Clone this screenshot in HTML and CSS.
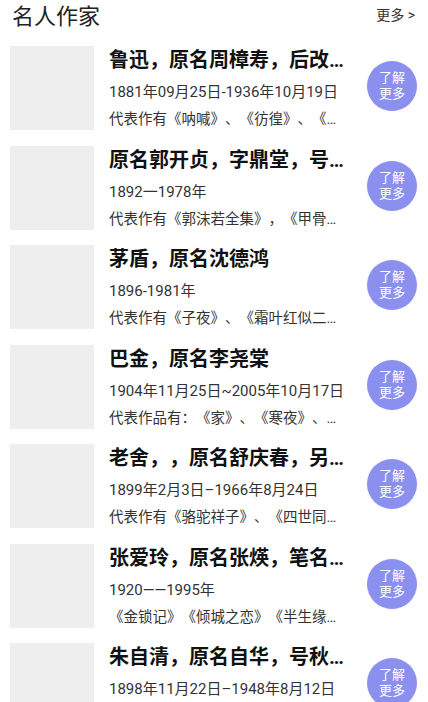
FILE: index.html
```html
<!DOCTYPE html>
<html lang="zh-CN">
<head>
<meta charset="utf-8">
<title>名人作家</title>
<link rel="stylesheet" href="styles.css">
</head>
<body>
<div class="page">
  <header class="head">
    <h1 class="head-title">名人作家</h1>
    <a class="head-more">更多 &gt;</a>
  </header>
  <ul class="list">
    <li class="item">
      <div class="thumb"></div>
      <div class="info">
        <div class="name">鲁迅，原名周樟寿，后改名周树人，字豫才</div>
        <div class="date">1881年09月25日-1936年10月19日</div>
        <div class="works">代表作有《呐喊》、《彷徨》、《朝花夕拾》</div>
      </div>
      <div class="btn"><span class="btn-line">了解</span><span class="btn-line">更多</span></div>
    </li>
    <li class="item">
      <div class="thumb"></div>
      <div class="info">
        <div class="name">原名郭开贞，字鼎堂，号尚武</div>
        <div class="date">1892一1978年</div>
        <div class="works">代表作有《郭沫若全集》，《甲骨文字研究》</div>
      </div>
      <div class="btn"><span class="btn-line">了解</span><span class="btn-line">更多</span></div>
    </li>
    <li class="item">
      <div class="thumb"></div>
      <div class="info">
        <div class="name">茅盾，原名沈德鸿</div>
        <div class="date">1896-1981年</div>
        <div class="works">代表作有《子夜》、《霜叶红似二月花》</div>
      </div>
      <div class="btn"><span class="btn-line">了解</span><span class="btn-line">更多</span></div>
    </li>
    <li class="item">
      <div class="thumb"></div>
      <div class="info">
        <div class="name">巴金，原名李尧棠</div>
        <div class="date">1904年11月25日~2005年10月17日</div>
        <div class="works">代表作品有：《家》、《寒夜》、《春》、《秋》</div>
      </div>
      <div class="btn"><span class="btn-line">了解</span><span class="btn-line">更多</span></div>
    </li>
    <li class="item">
      <div class="thumb"></div>
      <div class="info">
        <div class="name">老舍，，原名舒庆春，另有笔名</div>
        <div class="date">1899年2月3日–1966年8月24日</div>
        <div class="works">代表作有《骆驼祥子》、《四世同堂》</div>
      </div>
      <div class="btn"><span class="btn-line">了解</span><span class="btn-line">更多</span></div>
    </li>
    <li class="item">
      <div class="thumb"></div>
      <div class="info">
        <div class="name">张爱玲，原名张煐，笔名梁京</div>
        <div class="date">1920——1995年</div>
        <div class="works">《金锁记》《倾城之恋》《半生缘》《红玫瑰与白玫瑰》</div>
      </div>
      <div class="btn"><span class="btn-line">了解</span><span class="btn-line">更多</span></div>
    </li>
    <li class="item">
      <div class="thumb"></div>
      <div class="info">
        <div class="name">朱自清，原名自华，号秋实</div>
        <div class="date">1898年11月22日–1948年8月12日</div>
        <div class="works">代表作有《背影》、《荷塘月色》</div>
      </div>
      <div class="btn"><span class="btn-line">了解</span><span class="btn-line">更多</span></div>
    </li>
  </ul>
</div>
</body>
</html>
```

FILE: styles.css
```css
html, body {
  margin: 0;
  padding: 0;
  background: #ffffff;
  overflow: hidden;
}

body {
  font-family: Roboto, "Noto Sans CJK SC", sans-serif;
  color: #333333;
  text-spacing-trim: space-all;
}

.page {
  width: 428px;
}

.head {
  height: 34px;
  margin-bottom: 12px;
  padding: 0 13px 0 12px;
  display: flex;
  align-items: center;
  justify-content: space-between;
}

.head-title {
  margin: 0;
  font-size: 22px;
  font-weight: normal;
  line-height: 30px;
  color: #222222;
}

.head-more {
  font-size: 14px;
  line-height: 20px;
  color: #333333;
  margin-top: -4px;
}

.list {
  list-style: none;
  margin: 0;
  padding: 0;
}

.item {
  display: flex;
  align-items: flex-start;
  height: 84px;
  margin-bottom: 15.5px;
}

.thumb {
  flex: none;
  width: 84px;
  height: 84px;
  margin-left: 10px;
  background: #eeeeee;
}

.info {
  flex: none;
  width: 236px;
  margin-left: 15px;
}

.name,
.date,
.works {
  white-space: nowrap;
  overflow: hidden;
  text-overflow: ellipsis;
}

.name {
  font-size: 20px;
  font-weight: bold;
  line-height: 28px;
  color: #111111;
}

.date {
  margin-top: 8px;
  font-size: 15px;
  line-height: 20px;
  color: #333333;
}

.works {
  margin-top: 8px;
  font-size: 14.5px;
  line-height: 20px;
  color: #333333;
}

.btn {
  flex: none;
  align-self: center;
  width: 50px;
  height: 50px;
  margin: 0 11px 4px auto;
  border-radius: 50%;
  background: #8b90ef;
  box-shadow: 0 0 3px rgba(0, 0, 0, 0.06);
  color: #ffffff;
  font-size: 13px;
  line-height: 16px;
  display: flex;
  flex-direction: column;
  align-items: center;
  justify-content: center;
  text-align: center;
}

.btn-line {
  display: block;
}
```
